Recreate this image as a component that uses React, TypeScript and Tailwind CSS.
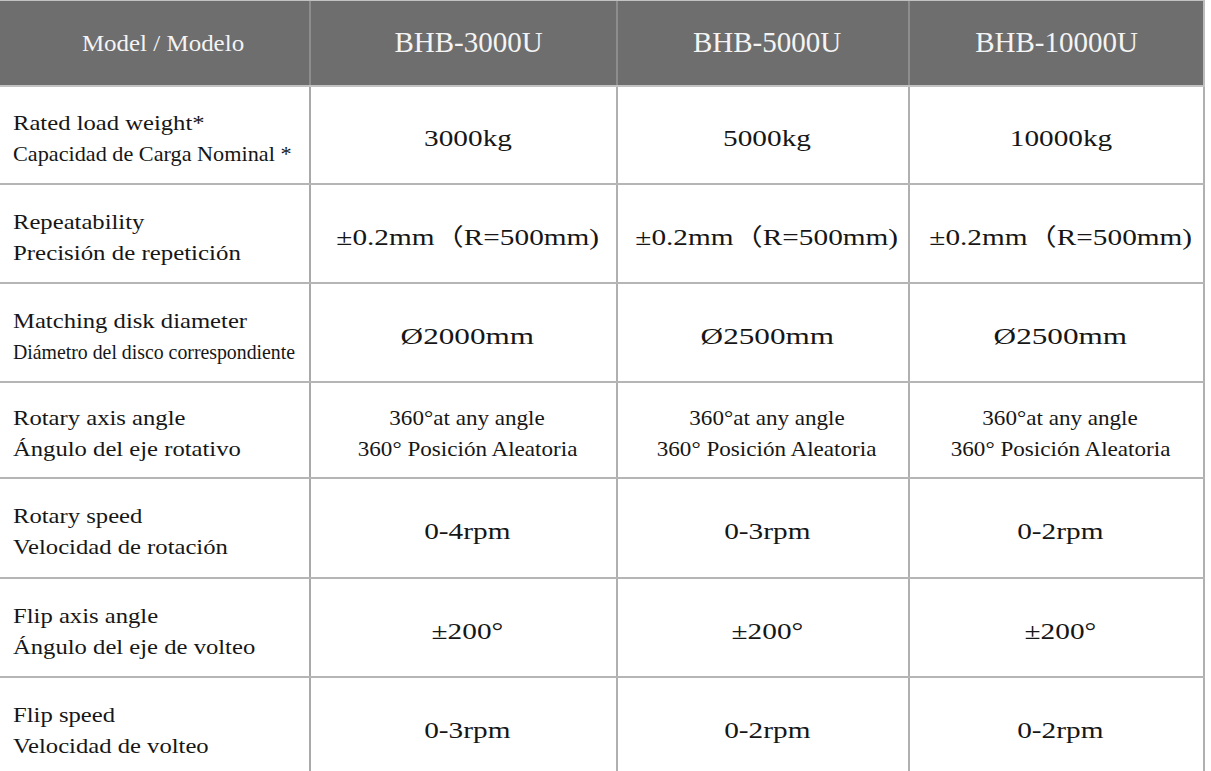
import React from "react";

type Line = { t: string; c: string };
type Row = {
  h: string;
  label: Line[];
  vals: string[];
  vc?: string;
  two?: boolean;
};

const rows: Row[] = [
  {
    h: "h-[98px]",
    label: [
      { t: "Rated load weight*", c: "scale-x-[1.12]" },
      { t: "Capacidad de Carga Nominal *", c: "scale-x-[1.01]" },
    ],
    vals: ["3000kg", "5000kg", "10000kg"],
    vc: "scale-x-[1.22]",
  },
  {
    h: "h-[99px]",
    label: [
      { t: "Repeatability", c: "scale-x-[1.12]" },
      { t: "Precisión de repetición", c: "scale-x-[1.13]" },
    ],
    vals: ["±0.2mm（R=500mm)", "±0.2mm（R=500mm)", "±0.2mm（R=500mm)"],
    vc: "scale-x-[1.22]",
  },
  {
    h: "h-[99px]",
    label: [
      { t: "Matching disk diameter", c: "scale-x-[1.12]" },
      { t: "Diámetro del disco correspondiente", c: "scale-x-[0.9]" },
    ],
    vals: ["Ø2000mm", "Ø2500mm", "Ø2500mm"],
    vc: "scale-x-[1.3]",
  },
  {
    h: "h-[96px]",
    label: [
      { t: "Rotary axis angle", c: "scale-x-[1.12]" },
      { t: "Ángulo del eje rotativo", c: "scale-x-[1.12]" },
    ],
    vals: ["", "", ""],
    two: true,
  },
  {
    h: "h-[100px]",
    label: [
      { t: "Rotary speed", c: "scale-x-[1.12]" },
      { t: "Velocidad de rotación", c: "scale-x-[1.12]" },
    ],
    vals: ["0-4rpm", "0-3rpm", "0-2rpm"],
    vc: "scale-x-[1.22]",
  },
  {
    h: "h-[99px]",
    label: [
      { t: "Flip axis angle", c: "scale-x-[1.12]" },
      { t: "Ángulo del eje de volteo", c: "scale-x-[1.12]" },
    ],
    vals: ["±200°", "±200°", "±200°"],
    vc: "scale-x-[1.22]",
  },
  {
    h: "h-[99px]",
    label: [
      { t: "Flip speed", c: "scale-x-[1.12]" },
      { t: "Velocidad de volteo", c: "scale-x-[1.12]" },
    ],
    vals: ["0-3rpm", "0-2rpm", "0-2rpm"],
    vc: "scale-x-[1.22]",
  },
];

const GRID = "grid grid-cols-[311px_307px_292px_295px]";

export default function App() {
  return (
    <div className="w-[1211px] h-[771px] overflow-hidden bg-white text-[#161616] font-[Liberation_Serif,Noto_Sans_CJK_SC,serif]">
      <div className="w-[1205px]">
        {/* Header */}
        <div className={`${GRID} h-[87px] bg-[#6e6e6e] border-t border-b-2 border-[#c2c2c2] text-[#f4f4f4]`}>
          <div className="flex items-center justify-center pl-[16px] border-r-2 border-[#8d8d8d]">
            <span className="inline-block whitespace-nowrap text-[24px] scale-x-[1.04]">Model / Modelo</span>
          </div>
          <div className="flex items-center justify-center pl-[10px] border-r-2 border-[#8d8d8d]">
            <span className="inline-block whitespace-nowrap text-[29px]">BHB-3000U</span>
          </div>
          <div className="flex items-center justify-center pl-[8px] border-r-2 border-[#8d8d8d]">
            <span className="inline-block whitespace-nowrap text-[29px]">BHB-5000U</span>
          </div>
          <div className="flex items-center justify-center border-r-2 border-[#bdbdbd]">
            <span className="inline-block whitespace-nowrap text-[29px]">BHB-10000U</span>
          </div>
        </div>

        {rows.map((r, i) => (
          <div key={i} className={`${GRID} ${r.h} border-b-2 border-[#b5b5b5]`}>
            <div className="flex flex-col justify-center pl-[13px] pt-[6px] border-r-2 border-[#a9a9a9] leading-[31px]">
              {r.label.map((l, j) => (
                <div key={j} className={`origin-left whitespace-nowrap text-[22px] ${l.c}`}>
                  {l.t}
                </div>
              ))}
            </div>
            {r.vals.map((v, k) => (
              <div
                key={k}
                className="flex flex-col items-center justify-center pl-[8px] pt-[6px] border-r-2 border-[#b0b0b0]"
              >
                {r.two ? (
                  <div className="flex flex-col items-center leading-[31px] text-[22px]">
                    <span className="inline-block whitespace-nowrap scale-x-[1.05]">360°at any angle</span>
                    <span className="inline-block whitespace-nowrap scale-x-[1.05]">360° Posición Aleatoria</span>
                  </div>
                ) : (
                  <span className={`inline-block whitespace-nowrap text-[24px] ${r.vc}`}>{v}</span>
                )}
              </div>
            ))}
          </div>
        ))}
      </div>
    </div>
  );
}
